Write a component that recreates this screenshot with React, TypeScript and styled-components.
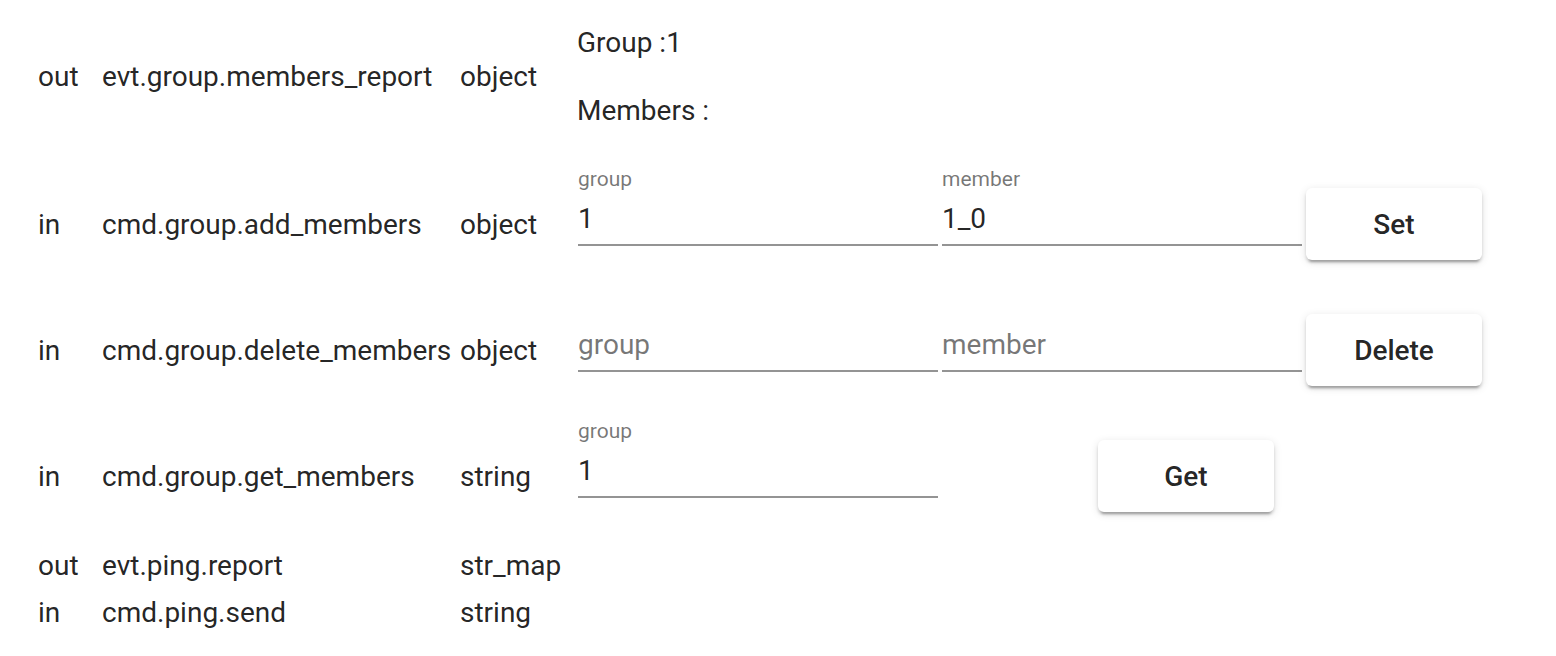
import React from "react";
import styled, { createGlobalStyle } from "styled-components";

const Global = createGlobalStyle`
  html, body { margin: 0; padding: 0; background: #ffffff; }
  body {
    font-family: Roboto, "Noto Sans", "Liberation Sans", sans-serif;
    color: rgba(0, 0, 0, 0.87);
  }
`;

const Table = styled.div`
  display: flex;
  flex-direction: column;
  width: 1556px;
  padding-left: 38px;
  box-sizing: border-box;
`;

const Row = styled.div<{ $h: number; $pb?: number; $mt?: number }>`
  display: grid;
  grid-template-columns: 64px 358px 117px 1fr;
  align-items: center;
  height: ${(p) => p.$h}px;
  padding-bottom: ${(p) => p.$pb ?? 0}px;
  margin-top: ${(p) => p.$mt ?? 0}px;
  box-sizing: border-box;
`;

const Cell = styled.div`
  font-size: 28px;
  line-height: 33px;
  white-space: nowrap;
`;

const Report = styled.div`
  display: flex;
  flex-direction: column;
  gap: 35px;
  font-size: 28px;
  line-height: 33px;
  white-space: nowrap;
`;

const Controls = styled.div`
  display: flex;
  align-items: center;
  align-self: stretch;
  padding-left: 1px;
`;

const Field = styled.div`
  display: flex;
  flex-direction: column;
  width: 360px;
  align-self: flex-start;
  margin-top: 8px;
  margin-right: 4px;
`;

const Label = styled.div<{ $hidden?: boolean }>`
  font-size: 21px;
  line-height: 21px;
  color: rgba(0, 0, 0, 0.54);
  visibility: ${(p) => (p.$hidden ? "hidden" : "visible")};
`;

const Value = styled.div<{ $placeholder?: boolean }>`
  margin-top: 12px;
  font-size: 28px;
  line-height: 33px;
  color: ${(p) => (p.$placeholder ? "rgba(0,0,0,0.54)" : "rgba(0,0,0,0.87)")};
  white-space: nowrap;
`;

const Underline = styled.div`
  margin-top: 9px;
  height: 2px;
  background: rgba(0, 0, 0, 0.42);
`;

const Button = styled.button<{ $ml?: number }>`
  width: 176px;
  height: 72px;
  margin-left: ${(p) => p.$ml ?? 0}px;
  border: none;
  border-radius: 6px;
  background: #ffffff;
  color: rgba(0, 0, 0, 0.87);
  font-family: Roboto, "Noto Sans", "Liberation Sans", sans-serif;
  font-size: 28px;
  font-weight: 500;
  box-shadow: 0 5px 2px -3px rgba(0, 0, 0, 0.2), 0 3px 3px 0 rgba(0, 0, 0, 0.14),
    0 2px 9px 0 rgba(0, 0, 0, 0.12);
  cursor: pointer;
  padding: 0;
`;

type FieldProps = { label: string; value?: string };

const TextField = ({ label, value }: FieldProps) => (
  <Field>
    <Label $hidden={!value}>{label}</Label>
    {value ? <Value>{value}</Value> : <Value $placeholder>{label}</Value>}
    <Underline />
  </Field>
);

export default function App() {
  return (
    <>
      <Global />
      <Table>
        <Row $h={161} $pb={8}>
          <Cell>out</Cell>
          <Cell>evt.group.members_report</Cell>
          <Cell>object</Cell>
          <Report>
            <div>Group :1</div>
            <div>Members :</div>
          </Report>
        </Row>
        <Row $h={126}>
          <Cell>in</Cell>
          <Cell>cmd.group.add_members</Cell>
          <Cell>object</Cell>
          <Controls>
            <TextField label="group" value="1" />
            <TextField label="member" value="1_0" />
            <Button>Set</Button>
          </Controls>
        </Row>
        <Row $h={126}>
          <Cell>in</Cell>
          <Cell>cmd.group.delete_members</Cell>
          <Cell>object</Cell>
          <Controls>
            <TextField label="group" />
            <TextField label="member" />
            <Button>Delete</Button>
          </Controls>
        </Row>
        <Row $h={126}>
          <Cell>in</Cell>
          <Cell>cmd.group.get_members</Cell>
          <Cell>string</Cell>
          <Controls>
            <TextField label="group" value="1" />
            <Button $ml={156}>Get</Button>
          </Controls>
        </Row>
        <Row $h={47} $mt={3}>
          <Cell>out</Cell>
          <Cell>evt.ping.report</Cell>
          <Cell>str_map</Cell>
          <div />
        </Row>
        <Row $h={47}>
          <Cell>in</Cell>
          <Cell>cmd.ping.send</Cell>
          <Cell>string</Cell>
          <div />
        </Row>
      </Table>
    </>
  );
}
